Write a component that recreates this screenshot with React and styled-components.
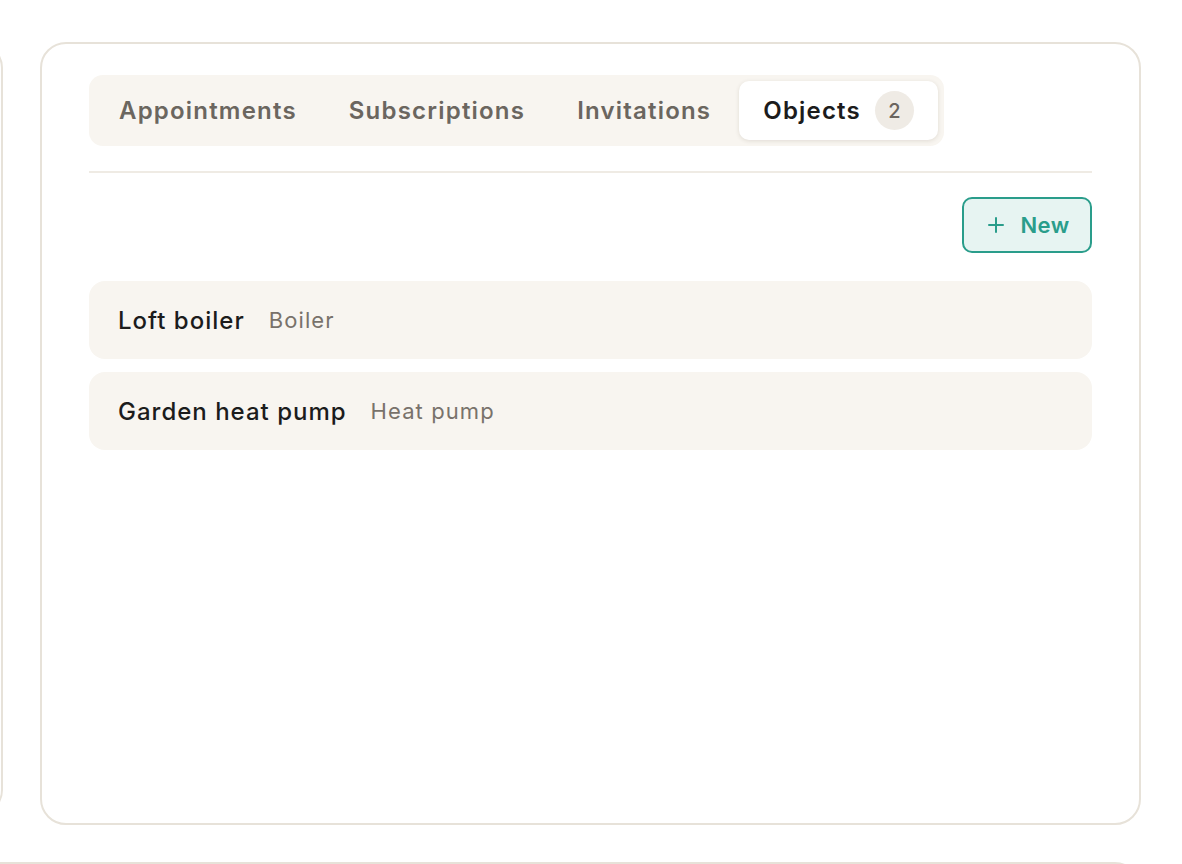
import React from 'react';
import styled, { createGlobalStyle } from 'styled-components';
import { Plus } from 'lucide-react';

const GlobalStyle = createGlobalStyle`
  html, body {
    margin: 0;
    padding: 0;
    background: #ffffff;
    overflow: hidden;
  }
  body {
    font-family: Inter, "Open Sans", sans-serif;
    -webkit-font-smoothing: antialiased;
  }
`;

const Page = styled.div`
  display: grid;
  grid-template-columns: 400px 1101px;
  column-gap: 37px;
  row-gap: 37px;
  margin-left: -397px;
  padding-top: 42px;
`;

const SidePanel = styled.div`
  box-sizing: border-box;
  height: 774px;
  border: 2px solid #e7e2d9;
  border-radius: 26px;
  background: #fff;
`;

const Card = styled.section`
  box-sizing: border-box;
  height: 783px;
  border: 2px solid #e7e2d9;
  border-radius: 26px;
  background: #fff;
  padding: 31px 47px;
  display: flex;
  flex-direction: column;
`;

const BottomCard = styled.div`
  grid-column: 1 / -1;
  box-sizing: border-box;
  height: 200px;
  border: 2px solid #e7e2d9;
  border-radius: 26px;
  background: #fff;
`;

const TabList = styled.div`
  align-self: flex-start;
  display: flex;
  gap: 4px;
  padding: 6px;
  background: #f8f5f0;
  border-radius: 14px;
`;

const Tab = styled.button`
  display: flex;
  align-items: center;
  gap: 14px;
  height: 59px;
  padding: 0 24px;
  border: none;
  border-radius: 10px;
  font-family: inherit;
  font-size: 24px;
  font-weight: 600;
  letter-spacing: 1.2px;
  cursor: pointer;
  color: ${p => (p.$active ? '#1c1c1c' : '#6b665f')};
  background: ${p => (p.$active ? '#ffffff' : 'transparent')};
  box-shadow: ${p => (p.$active ? '0 1px 4px rgba(60, 45, 20, 0.12)' : 'none')};
`;

const Count = styled.span`
  display: inline-flex;
  align-items: center;
  justify-content: center;
  width: 39px;
  height: 39px;
  border-radius: 50%;
  background: #efebe5;
  color: #6b655e;
  font-size: 20px;
  font-weight: 500;
  letter-spacing: 0;
`;

const Divider = styled.hr`
  margin: 25px 0 0;
  border: none;
  height: 2px;
  background: #efebe4;
`;

const Toolbar = styled.div`
  display: flex;
  justify-content: flex-end;
  margin-top: 24px;
`;

const NewButton = styled.button`
  display: flex;
  align-items: center;
  gap: 12px;
  box-sizing: border-box;
  height: 56px;
  width: 130px;
  justify-content: center;
  border: 2px solid #2a9d8b;
  border-radius: 10px;
  background: #e7f4f2;
  color: #2a9d8b;
  font-family: inherit;
  font-size: 22px;
  font-weight: 600;
  letter-spacing: 0.4px;
  cursor: pointer;
`;

const List = styled.div`
  display: flex;
  flex-direction: column;
  gap: 13px;
  margin-top: 28px;
`;

const Row = styled.div`
  display: flex;
  align-items: center;
  gap: 24px;
  height: 78px;
  padding: 0 29px;
  background: #f8f5f0;
  border-radius: 16px;
`;

const Name = styled.span`
  font-size: 24px;
  font-weight: 500;
  letter-spacing: 1px;
  color: #1c1c1c;
`;

const Kind = styled.span`
  font-size: 22px;
  font-weight: 400;
  letter-spacing: 1.1px;
  color: #78726b;
`;

const tabs = ['Appointments', 'Subscriptions', 'Invitations'];

const objects = [
  { name: 'Loft boiler', kind: 'Boiler' },
  { name: 'Garden heat pump', kind: 'Heat pump' },
];

export default function App() {
  return (
    <>
      <GlobalStyle />
      <Page>
        <SidePanel />
        <Card>
          <TabList>
            {tabs.map(t => (
              <Tab key={t}>{t}</Tab>
            ))}
            <Tab $active>
              Objects
              <Count>{objects.length}</Count>
            </Tab>
          </TabList>
          <Divider />
          <Toolbar>
            <NewButton>
              <Plus size={24} strokeWidth={2} />
              New
            </NewButton>
          </Toolbar>
          <List>
            {objects.map(o => (
              <Row key={o.name}>
                <Name>{o.name}</Name>
                <Kind>{o.kind}</Kind>
              </Row>
            ))}
          </List>
        </Card>
        <BottomCard />
      </Page>
    </>
  );
}
